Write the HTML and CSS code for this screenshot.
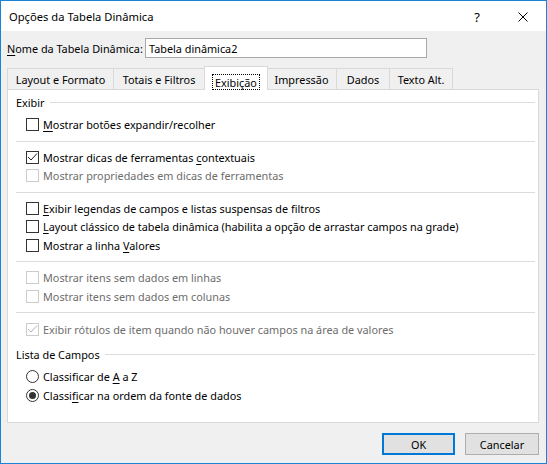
FILE: index.html
```html
<!DOCTYPE html>
<html lang="pt">
<head>
<meta charset="utf-8">
<title>Opções da Tabela Dinâmica</title>
<link rel="stylesheet" href="styles.css">
</head>
<body>
<div class="window">
  <div class="titlebar">
    <div class="title">Opções da Tabela Dinâmica</div>
    <div class="capbtn help">?</div>
    <div class="capbtn close">
      <svg width="10" height="10" viewBox="0 0 10 10"><path d="M0.5 0.5L9.5 9.5M9.5 0.5L0.5 9.5" stroke="#000" stroke-width="1" fill="none"/></svg>
    </div>
  </div>
  <div class="content">
    <div class="name-row">
      <div class="name-label"><u>N</u>ome da Tabela Dinâmica:</div>
      <div class="textbox">Tabela dinâmica2</div>
    </div>
    <div class="tabs">
      <div class="tab t-layout">Layout e Formato</div>
      <div class="tab t-totais">Totais e Filtros</div>
      <div class="tab t-exib active"><span class="focus">Exibição</span></div>
      <div class="tab t-impr">Impressão</div>
      <div class="tab t-dados">Dados</div>
      <div class="tab t-texto">Texto Alt.</div>
    </div>
    <div class="panel">
      <div class="group"><span>Exibir</span><div class="gline"></div></div>
      <div class="opt"><span class="cb"></span><span><u>M</u>ostrar botões expandir/recolher</span></div>
      <div class="sep"></div>
      <div class="opt"><span class="cb"><svg width="11" height="11" viewBox="0 0 11 11"><path d="M1 5L4 8L10 1.5" stroke="#222" stroke-width="1" fill="none"/></svg></span><span>Mostrar dicas de ferramentas <u>c</u>ontextuais</span></div>
      <div class="opt disabled"><span class="cb"></span><span>Mostrar propriedades em dicas de ferramentas</span></div>
      <div class="sep"></div>
      <div class="opt"><span class="cb"></span><span><u>E</u>xibir legendas de campos e listas suspensas de filtros</span></div>
      <div class="opt"><span class="cb"></span><span><u>L</u>ayout clássico de tabela dinâmica (habilita a opção de arrastar campos na grade)</span></div>
      <div class="opt"><span class="cb"></span><span>Mostrar a linha <u>V</u>alores</span></div>
      <div class="sep"></div>
      <div class="opt disabled"><span class="cb"></span><span>Mostrar itens sem dados em linhas</span></div>
      <div class="opt disabled"><span class="cb"></span><span>Mostrar itens sem dados em colunas</span></div>
      <div class="sep"></div>
      <div class="opt disabled"><span class="cb"><svg width="11" height="11" viewBox="0 0 11 11"><path d="M1 5L4 8L10 1.5" stroke="#b4b4b4" stroke-width="1" fill="none"/></svg></span><span>Exibir rótulos de item quando não houver campos na área de valores</span></div>
      <div class="group group2"><span>Lista de Campos</span><div class="gline"></div></div>
      <div class="opt radio-opt"><span class="rb"></span><span>Classificar de <u>A</u> a Z</span></div>
      <div class="opt"><span class="rb"><span class="dot"></span></span><span>Classi<u>f</u>icar na ordem da fonte de dados</span></div>
    </div>
    <div class="buttons">
      <div class="btn primary">OK</div>
      <div class="btn">Cancelar</div>
    </div>
  </div>
</div>
</body>
</html>
```
FILE: styles.css
```css
* { box-sizing: border-box; margin: 0; padding: 0; }
html, body { width: 547px; height: 464px; overflow: hidden; }
body {
  font-family: "Noto Sans", "DejaVu Sans", sans-serif;
  font-size: 10.85px;
  color: #000;
  background: #f0f0f0;
}
u { text-decoration: underline; text-underline-offset: 2px; text-decoration-thickness: 1px; }

.window {
  width: 547px;
  height: 464px;
  border: 1px solid #1883d7;
  background: #f0f0f0;
  display: flex;
  flex-direction: column;
}

.titlebar {
  flex: none;
  height: 30px;
  background: #fff;
  display: flex;
  align-items: stretch;
}
.title {
  flex: 1;
  padding-left: 8px;
  font-size: 11.2px;
  display: flex;
  align-items: center;
  padding-top: 1px;
}
.capbtn {
  width: 46px;
  display: flex;
  align-items: center;
  justify-content: center;
}
.help { font-size: 13px; padding-top: 2px; }
.close svg { display: block; margin-top: 2px; }

.content {
  flex: 1;
  display: flex;
  flex-direction: column;
  padding: 7px 7px 8px 6px;
}

.name-row {
  display: flex;
  align-items: center;
  height: 20px;
}
.name-label { width: 138px; }
.textbox {
  width: 282px;
  height: 20px;
  background: #fff;
  border: 1px solid #a9a9a9;
  padding-left: 3px;
  display: flex;
  align-items: center;
}

.tabs {
  display: flex;
  align-items: flex-end;
  height: 23px;
  margin-top: 8px;
}
.tab {
  height: 21px;
  border: 1px solid #d9d9d9;
  border-bottom: none;
  background: #f0f0f0;
  margin-left: -1px;
  display: flex;
  align-items: center;
  justify-content: center;
}
.t-layout { width: 107px; margin-left: 0; }
.t-totais { width: 92px; }
.t-exib { width: 64px; }
.t-impr { width: 71px; margin-left: -2px; }
.t-dados { width: 54px; }
.t-texto { width: 64px; }
.tab.active {
  height: 24px;
  margin-bottom: -1px;
  background: #fff;
  position: relative;
  z-index: 1;
  align-items: flex-start;
  padding-top: 7px;
}
.focus {
  border: 1px dotted #000;
  padding: 0 2px;
  line-height: 13px;
  height: 16px;
  display: flex;
  align-items: center;
}

.panel {
  flex: 1;
  background: #fff;
  border: 1px solid #d9d9d9;
  padding: 4.8px 3px 0 8px;
}
.group {
  display: flex;
  align-items: center;
  height: 16px;
  gap: 5px;
  margin-bottom: 4.5px;
}
.group2 { margin-top: 8px; margin-bottom: 5.5px; }
.gline { flex: 1; height: 1px; background: #dcdcdc; }
.sep { height: 1px; background: #dcdcdc; margin: 7px 0 6.5px; }

.opt {
  display: flex;
  align-items: center;
  height: 18.33px;
  padding-left: 10px;
  gap: 4px;
  white-space: nowrap;
}
.opt.disabled { color: #6d6d6d; }
.cb {
  flex: none;
  width: 13px;
  height: 13px;
  border: 1px solid #333;
  background: #fff;
  display: flex;
  align-items: center;
  justify-content: center;
}
.cb svg { display: block; }
.disabled .cb { border-color: #cccccc; }
.rb {
  flex: none;
  width: 13px;
  height: 13px;
  border: 1px solid #333;
  border-radius: 50%;
  background: #fff;
  display: flex;
  align-items: center;
  justify-content: center;
}
.dot { width: 7px; height: 7px; border-radius: 50%; background: #333; }

.buttons {
  display: flex;
  justify-content: flex-end;
  gap: 10px;
  margin-top: 10px;
}
.btn {
  width: 74px;
  height: 22px;
  background: #e1e1e1;
  border: 1px solid #adadad;
  display: flex;
  align-items: center;
  justify-content: center;
}
.btn.primary { width: 73px; border: 2px solid #0078d7; }
```
